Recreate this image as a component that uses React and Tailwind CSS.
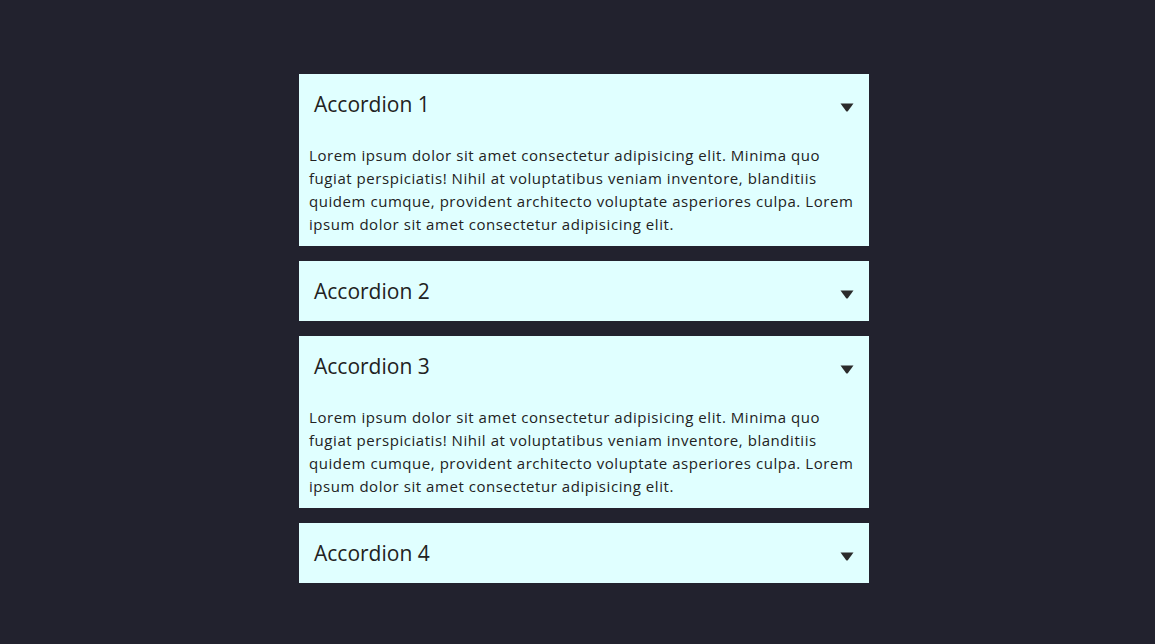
import { useState } from 'react';

const items = [
    { id: 1, title: 'Accordion 1', open: true },
    { id: 2, title: 'Accordion 2', open: false },
    { id: 3, title: 'Accordion 3', open: true },
    { id: 4, title: 'Accordion 4', open: false },
];

// wrapped the same way as the reference
const bodyLines = [
    'Lorem ipsum dolor sit amet consectetur adipisicing elit. Minima quo',
    'fugiat perspiciatis! Nihil at voluptatibus veniam inventore, blanditiis',
    'quidem cumque, provident architecto voluptate asperiores culpa. Lorem',
    'ipsum dolor sit amet consectetur adipisicing elit.',
];

const Caret = () => (
    <svg width="14" height="9" viewBox="0 0 14 9" className="mt-[6px]">
        <path d="M0.5 0.5 H13.5 L7.8 8.2 Q7 9 6.2 8.2 Z" fill="#2b2b2b" />
    </svg>
);

const AccordionItem = ({ title, isOpen, onToggle }) => (
    <div className="bg-[#e0ffff] text-[#222]">
        <button
            onClick={onToggle}
            className="w-full h-[60px] flex items-center justify-between pl-[15px] pr-[15px] text-left cursor-pointer"
        >
            <span className="text-[21px] leading-none">{title}</span>
            <Caret />
        </button>
        {isOpen && (
            <p className="px-[10px] py-[10px] text-[15px] leading-[23px] tracking-[0.55px]">
                {bodyLines.map((line, i) => (
                    <span key={i} className="block whitespace-nowrap">{line}</span>
                ))}
            </p>
        )}
    </div>
);

export default function App() {
    const [open, setOpen] = useState(items.filter(i => i.open).map(i => i.id));

    const toggle = (id) => {
        setOpen(prev => prev.includes(id) ? prev.filter(x => x !== id) : [...prev, id]);
    };

    return (
        <div className="min-h-[644px] bg-[#22222e] flex justify-center pl-[13px] pt-[74px] font-['Open_Sans',sans-serif]">
            <div className="w-[570px] flex flex-col gap-[15px]">
                {items.map(item => (
                    <AccordionItem
                        key={item.id}
                        title={item.title}
                        isOpen={open.includes(item.id)}
                        onToggle={() => toggle(item.id)}
                    />
                ))}
            </div>
        </div>
    );
}
